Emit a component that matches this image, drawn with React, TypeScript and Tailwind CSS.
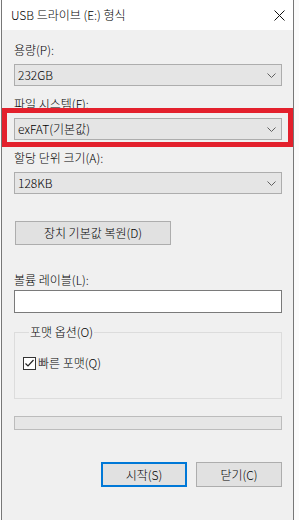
import React from 'react'

const FONT = 'font-["Noto_Sans_CJK_KR","Noto_Sans",sans-serif] font-light'

function Combo({ value }: { value: string }) {
  return (
    <div className="h-[22px] flex items-center justify-between border border-[#adadad] bg-[#e5e5e5] pl-[3px] pr-[5px]">
      <span className="text-[12px] leading-4 text-black">{value}</span>
      <svg width="9" height="5" viewBox="0 0 9 5" fill="none">
        <polyline points="0.5,0.5 4.5,4.5 8.5,0.5" stroke="#606060" strokeWidth="1" />
      </svg>
    </div>
  )
}

function Label({ text, className = '' }: { text: string; className?: string }) {
  return <div className={`h-4 text-[12px] leading-4 text-black ${className}`}>{text}</div>
}

export default function App() {
  return (
    <div className={`relative w-[299px] h-[520px] overflow-hidden bg-[#fbfbfb] ${FONT}`}>
      {/* window */}
      <div className="ml-px w-[293px] h-full flex flex-col border-x border-[#777777] bg-[#f0f0f0]">
        {/* title bar */}
        <div className="h-[30px] shrink-0 bg-white flex items-center justify-between pl-[9px] pr-[8px]">
          <span className="text-[12px] leading-4 text-black">USB 드라이브 (E:) 형식</span>
          <svg width="11" height="11" viewBox="0 0 11 11" fill="none">
            <path d="M0.5 0.5 L10.5 10.5 M10.5 0.5 L0.5 10.5" stroke="#111" strokeWidth="1" />
          </svg>
        </div>

        {/* body */}
        <div className="flex flex-col pl-[12px] pr-[11px]">
          <Label text="용량(P):" className="mt-[12px]" />
          <div className="mt-[6px]"><Combo value="232GB" /></div>

          <Label text="파일 시스템(F):" className="mt-[10px]" />
          <div className="mt-[6px]"><Combo value="exFAT(기본값)" /></div>

          <Label text="할당 단위 크기(A):" className="mt-[10px]" />
          <div className="mt-[6px]"><Combo value="128KB" /></div>

          <button className="mt-[27px] ml-px w-[156px] h-[24px] border border-[#adadad] bg-[#e1e1e1] text-[12px] leading-4 text-black flex items-center justify-center">
            장치 기본값 복원(D)
          </button>

          <Label text="볼륨 레이블(L):" className="mt-[27px]" />
          <div className="mt-[2px] h-[23px] border border-[#7a7a7a] bg-white" />

          <fieldset className="mt-[11px] h-[75px] border border-[#dcdcdc] pl-[8px]">
            <legend className="ml-[6px] px-px text-[12px] leading-4 text-black">포맷 옵션(O)</legend>
            <div className="mt-[15px] flex items-center gap-[2px]">
              <div className="w-[13px] h-[13px] border border-[#333333] bg-white flex items-center justify-center">
                <svg width="11" height="11" viewBox="0 0 11 11" fill="none">
                  <polyline points="1.5,5.5 4,8 9.5,2" stroke="#222" strokeWidth="1.2" />
                </svg>
              </div>
              <span className="text-[12px] leading-4 text-black">빠른 포맷(Q)</span>
            </div>
          </fieldset>

          <div className="mt-[17px] h-[14px] border border-[#bcbcbc] bg-[#e6e6e6]" />

          <div className="mt-[32px] flex justify-end gap-[9px]">
            <button className="w-[86px] h-[25px] border-2 border-[#0078d7] bg-[#e1e1e1] text-[12px] leading-4 text-black flex items-center justify-center">
              시작(S)
            </button>
            <button className="w-[86px] h-[25px] border border-[#adadad] bg-[#e1e1e1] text-[12px] leading-4 text-black flex items-center justify-center">
              닫기(C)
            </button>
          </div>
        </div>
      </div>

      {/* red highlight annotation */}
      <div className="absolute left-[2px] top-[108px] w-[291px] h-[39px] border-[5px] border-[#e3202c]" />
    </div>
  )
}
